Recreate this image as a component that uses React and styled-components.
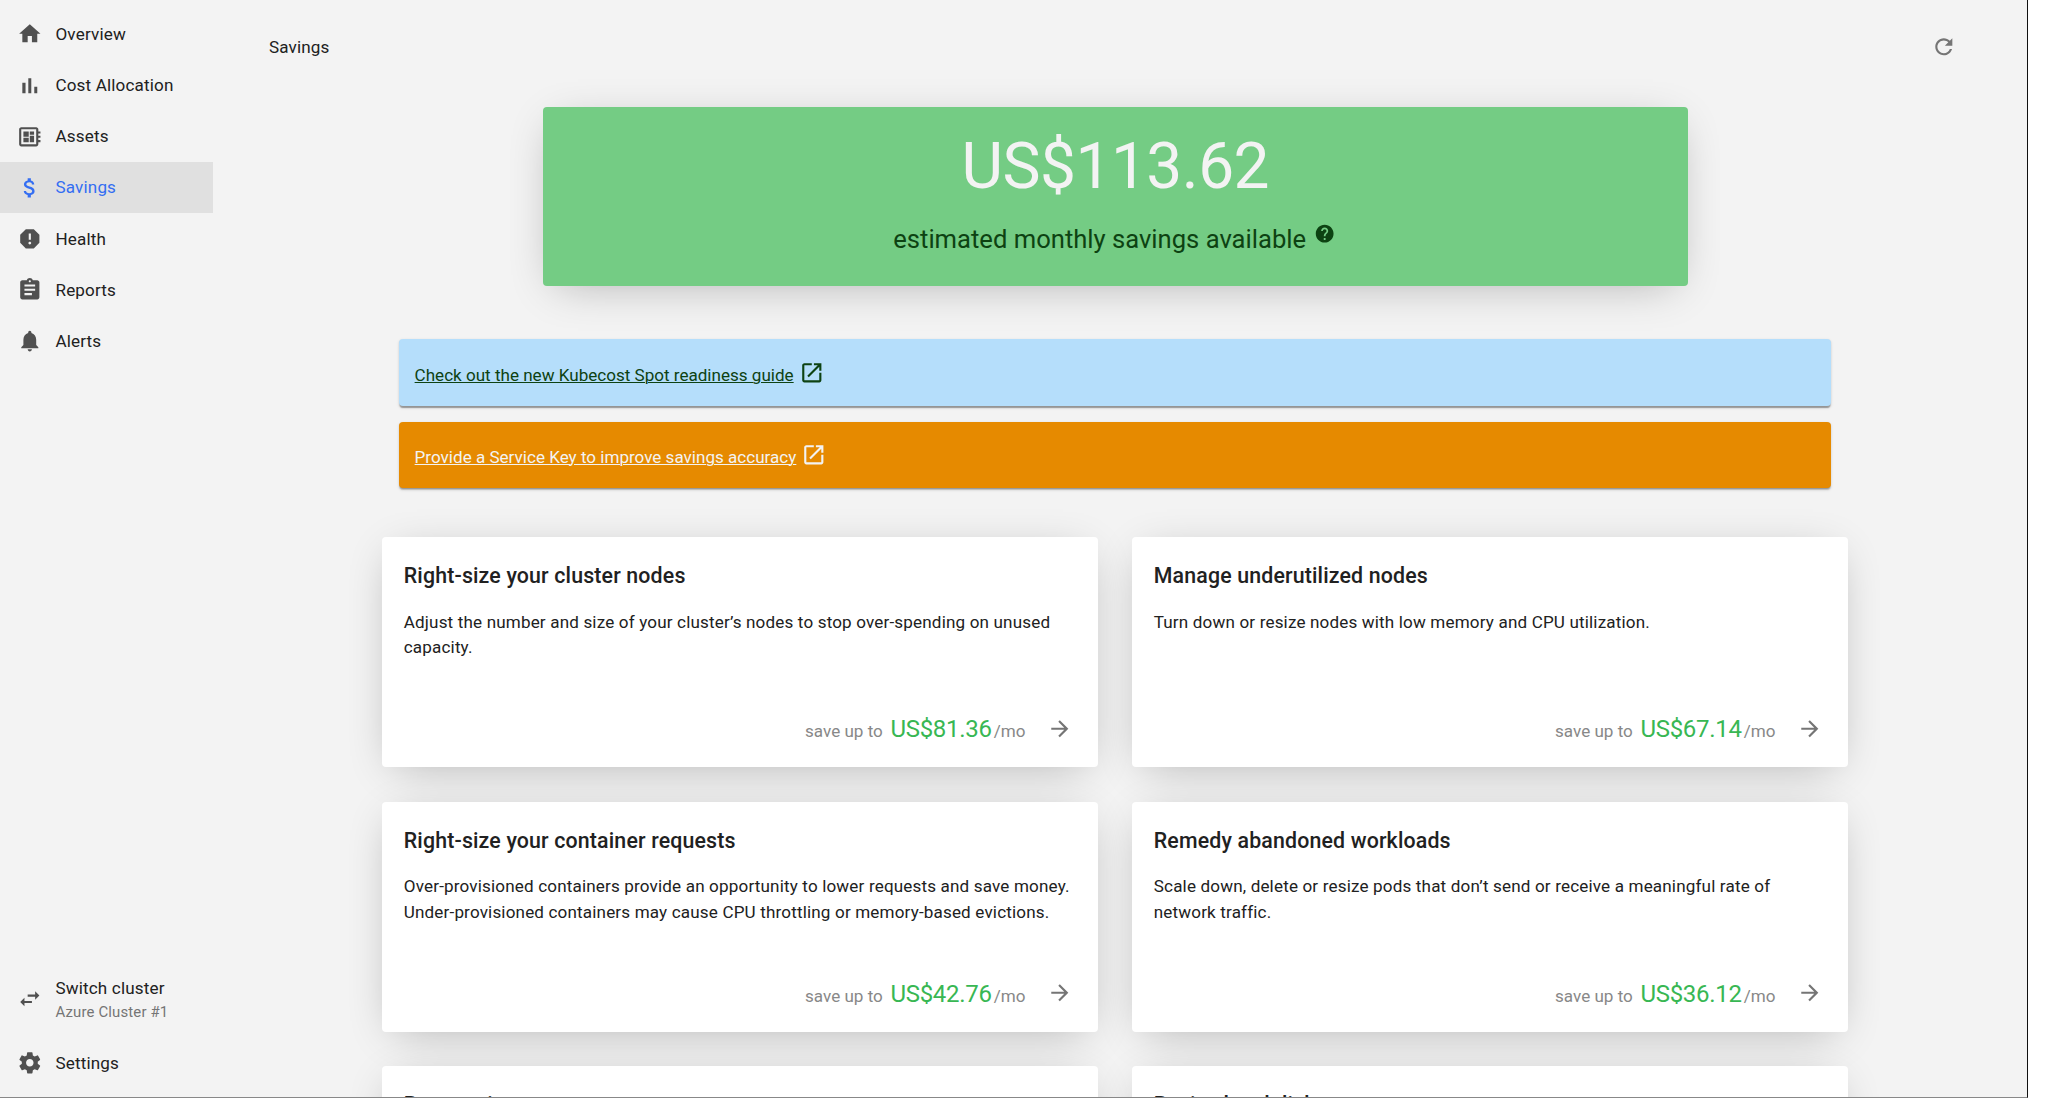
import React from "react";
import styled, { createGlobalStyle } from "styled-components";

const GlobalStyle = createGlobalStyle`
  * { box-sizing: border-box; }
  body {
    margin: 0;
    background: #fff;
    color: #212121;
    font-family: Roboto, "Liberation Sans", sans-serif;
    font-size: 17.07px;
    line-height: 25.6px;
    letter-spacing: 0.16px;
    overflow: hidden;
  }
`;

const ICONS = {
  home: "M10 20v-6h4v6h5v-8h3L12 3 2 12h3v8z",
  bars: "M5 9.2h3V19H5zM10.6 5h2.8v14h-2.8zm5.6 8H19v6h-2.8z",
  board:
    "M22 9V7h-2V5c0-1.1-.9-2-2-2H4c-1.1 0-2 .9-2 2v14c0 1.1.9 2 2 2h14c1.1 0 2-.9 2-2v-2h2v-2h-2v-2h2v-2h-2V9h2zm-4 10H4V5h14v14zM6 13h5v4H6zm6-6h4v3h-4zM6 7h5v5H6zm6 4h4v6h-4z",
  dollar:
    "M11.8 10.9c-2.27-.59-3-1.2-3-2.15 0-1.09 1.01-1.85 2.7-1.85 1.78 0 2.44.85 2.5 2.1h2.21c-.07-1.72-1.12-3.3-3.21-3.81V3h-3v2.16c-1.94.42-3.5 1.68-3.5 3.61 0 2.31 1.91 3.46 4.7 4.13 2.5.6 3 1.48 3 2.41 0 .69-.49 1.79-2.7 1.79-2.06 0-2.87-.92-2.98-2.1h-2.2c.12 2.19 1.76 3.42 3.68 3.83V21h3v-2.15c1.95-.37 3.5-1.5 3.5-3.55 0-2.84-2.43-3.81-4.7-4.4z",
  report:
    "M15.73 3H8.27L3 8.27v7.46L8.27 21h7.46L21 15.73V8.27L15.73 3zM12 17.3c-.72 0-1.3-.58-1.3-1.3 0-.72.58-1.3 1.3-1.3.72 0 1.3.58 1.3 1.3 0 .72-.58 1.3-1.3 1.3zm1-4.3h-2V7h2v6z",
  assignment:
    "M19 3h-4.18C14.4 1.84 13.3 1 12 1c-1.3 0-2.4.84-2.82 2H5c-1.1 0-2 .9-2 2v14c0 1.1.9 2 2 2h14c1.1 0 2-.9 2-2V5c0-1.1-.9-2-2-2zm-7 0c.55 0 1 .45 1 1s-.45 1-1 1-1-.45-1-1 .45-1 1-1zm2 14H7v-2h7v2zm3-4H7v-2h10v2zm0-4H7V7h10v2z",
  bell: "M12 22c1.1 0 2-.9 2-2h-4c0 1.1.89 2 2 2zm6-6v-5c0-3.07-1.64-5.64-4.5-6.32V4c0-.83-.67-1.5-1.5-1.5s-1.5.67-1.5 1.5v.68C7.63 5.36 6 7.92 6 11v5l-2 2v1h16v-1l-2-2z",
  swap: "M6.99 11L3 15l3.99 4v-3H14v-2H6.99v-3zM21 9l-3.99-4v3H10v2h7.01v3L21 9z",
  gear: "M19.43 12.98c.04-.32.07-.64.07-.98s-.03-.66-.07-.98l2.11-1.65c.19-.15.24-.42.12-.64l-2-3.46c-.12-.22-.39-.3-.61-.22l-2.49 1c-.52-.4-1.08-.73-1.69-.98l-.38-2.65C14.46 2.18 14.25 2 14 2h-4c-.25 0-.46.18-.49.42l-.38 2.65c-.61.25-1.17.59-1.69.98l-2.49-1c-.23-.09-.49 0-.61.22l-2 3.46c-.13.22-.07.49.12.64l2.11 1.65c-.04.32-.07.65-.07.98s.03.66.07.98l-2.11 1.65c-.19.15-.24.42-.12.64l2 3.46c.12.22.39.3.61.22l2.49-1c.52.4 1.08.73 1.69.98l.38 2.65c.03.24.24.42.49.42h4c.25 0 .46-.18.49-.42l.38-2.65c.61-.25 1.17-.59 1.69-.98l2.49 1c.23.09.49 0 .61-.22l2-3.46c.12-.22.07-.49-.12-.64l-2.11-1.65zM12 15.5c-1.93 0-3.5-1.57-3.5-3.5s1.57-3.5 3.5-3.5 3.5 1.57 3.5 3.5-1.57 3.5-3.5 3.5z",
  refresh:
    "M17.65 6.35C16.2 4.9 14.21 4 12 4c-4.42 0-7.99 3.58-7.99 8s3.57 8 7.99 8c3.73 0 6.84-2.55 7.73-6h-2.08c-.82 2.33-3.04 4-5.65 4-3.31 0-6-2.69-6-6s2.69-6 6-6c1.66 0 3.14.69 4.22 1.78L13 11h7V4l-2.35 2.35z",
  help: "M12 2C6.48 2 2 6.48 2 12s4.48 10 10 10 10-4.48 10-10S17.52 2 12 2zm1 17h-2v-2h2v2zm2.07-7.75l-.9.92C13.45 12.9 13 13.5 13 15h-2v-.5c0-1.1.45-2.1 1.17-2.83l1.24-1.26c.37-.36.59-.86.59-1.41 0-1.1-.9-2-2-2s-2 .9-2 2H8c0-2.21 1.79-4 4-4s4 1.79 4 4c0 .88-.36 1.68-.93 2.25z",
  launch:
    "M19 19H5V5h7V3H5c-1.11 0-2 .9-2 2v14c0 1.1.89 2 2 2h14c1.1 0 2-.9 2-2v-7h-2v7zM14 3v2h3.59l-9.83 9.83 1.41 1.41L19 6.41V10h2V3h-7z",
  arrow: "M12 4l-1.41 1.41L16.17 11H4v2h12.17l-5.58 5.59L12 20l8-8z",
};

const Svg = styled.svg`
  display: block;
  flex: none;
  width: ${(p) => p.$size}px;
  height: ${(p) => p.$size}px;
  fill: currentColor;
`;

const Icon = ({ name, size = 25.6 }) => (
  <Svg viewBox="0 0 24 24" $size={size} aria-hidden="true">
    <path d={ICONS[name]} />
  </Svg>
);

const Window = styled.div`
  display: flex;
  width: 2028px;
  height: 1098px;
  overflow: hidden;
  background: #f3f3f3;
  border-right: 1px solid #111;
  border-bottom: 1px solid #888;
`;

const Sidebar = styled.nav`
  display: flex;
  flex: none;
  flex-direction: column;
  justify-content: space-between;
  width: 213.33px;
  padding: 8.53px 0;
`;

const NavGroup = styled.div`
  display: flex;
  flex-direction: column;
`;

const NavItem = styled.a`
  display: flex;
  align-items: center;
  height: ${(p) => (p.$tall ? 76.8 : 51.2)}px;
  padding-left: 17.07px;
  gap: 12.8px;
  color: ${(p) => (p.$active ? "#346ef2" : "#212121")};
  background: ${(p) => (p.$active ? "#e0e0e0" : "transparent")};
`;

const NavIcon = styled.span`
  color: ${(p) => (p.$active ? "#346ef2" : "#505050")};
`;

const NavLabel = styled.span`
  display: flex;
  flex-direction: column;
  padding-top: 1px;
`;

const NavNote = styled.span`
  margin-bottom: -1px;
  padding-top: 1px;
  color: #757575;
  font-size: 14.93px;
  line-height: 21.8px;
`;

const Main = styled.main`
  display: flex;
  flex: 1;
  flex-direction: column;
  align-items: center;
  min-width: 0;
  padding: 0 64.7px 0 55px;
`;

const Header = styled.header`
  display: flex;
  flex: none;
  align-items: center;
  justify-content: space-between;
  align-self: stretch;
  height: 93.8px;
  padding-right: 6.1px;
`;

const PageTitle = styled.span`
  padding: 1.2px 0 0 0.6px;
`;

const RefreshButton = styled.span`
  color: #757575;
`;

const ELEVATED = "0 8.5px 42.7px -12.8px rgba(0, 0, 0, 0.3)";

const Hero = styled.section`
  display: flex;
  flex: none;
  flex-direction: column;
  align-items: center;
  width: 1145.5px;
  height: 178.7px;
  margin-top: 13.2px;
  padding-top: 22.3px;
  border-radius: 4px;
  background: #74cc84;
  box-shadow: ${ELEVATED};
`;

const HeroAmount = styled.div`
  color: #f3f3f3;
  font-size: 64px;
  line-height: 75px;
  letter-spacing: -0.00833em;
`;

const HeroCaption = styled.div`
  display: flex;
  align-items: flex-start;
  gap: 8px;
  margin-top: 19.7px;
  padding-right: 2px;
  color: #0d4212;
  font-size: 25.6px;
  line-height: 30px;
  letter-spacing: 0;
`;

const HelpMark = styled.span`
  margin-top: -1px;
`;

const Banners = styled.div`
  display: flex;
  flex: none;
  flex-direction: column;
  gap: 16px;
  width: 1432px;
  margin-top: 53.5px;
`;

const Banner = styled.a`
  display: flex;
  align-items: flex-start;
  gap: 5px;
  height: 66.4px;
  padding: 23.5px 15.3px 0;
  border-radius: 4px;
  color: ${(p) => p.$color};
  background: ${(p) => p.$background};
  letter-spacing: 0;
  box-shadow:
    0 2.1px 1.1px -1.1px rgba(0, 0, 0, 0.2),
    0 1.1px 1.1px 0 rgba(0, 0, 0, 0.14),
    0 1.1px 3.2px 0 rgba(0, 0, 0, 0.12);
`;

const BannerText = styled.span`
  text-decoration: underline;
  text-decoration-thickness: 1px;
`;

const BannerIcon = styled.span`
  margin-top: -3.1px;
`;

const Cards = styled.div`
  display: grid;
  flex: none;
  grid-template-columns: 1fr 1fr;
  grid-auto-rows: 230.3px;
  gap: 34.3px;
  width: 1465.7px;
  margin-top: 49px;
`;

const Card = styled.article`
  display: flex;
  flex-direction: column;
  padding: 21.3px;
  border-radius: 4px;
  background: #fff;
  box-shadow: ${ELEVATED};
`;

const CardTitle = styled.h2`
  margin: 0;
  padding-top: 0.8px;
  font-size: 21.33px;
  font-weight: 500;
  line-height: 34.1px;
  letter-spacing: 0.16px;
`;

const CardText = styled.p`
  margin: 16.7px 0 0;
`;

const CardFooter = styled.div`
  display: flex;
  align-items: center;
  justify-content: flex-end;
  margin-top: auto;
  margin-bottom: -2.4px;
  padding-right: 4.1px;
  color: #888;
`;

const Savings = styled.div`
  display: flex;
  align-items: baseline;
  line-height: 34px;
  letter-spacing: 0;
`;

const Amount = styled.span`
  margin: 0 2px 0 7.6px;
  color: #38b753;
  font-size: 24px;
  letter-spacing: -0.28px;
`;

const CardArrow = styled.span`
  margin: 0 0 3.6px 21.7px;
  color: #757575;
`;

const NAV = [
  { icon: "home", label: "Overview" },
  { icon: "bars", label: "Cost Allocation" },
  { icon: "board", label: "Assets" },
  { icon: "dollar", label: "Savings", active: true },
  { icon: "report", label: "Health" },
  { icon: "assignment", label: "Reports" },
  { icon: "bell", label: "Alerts" },
];

const NAV_BOTTOM = [
  { icon: "swap", label: "Switch cluster", note: "Azure Cluster #1" },
  { icon: "gear", label: "Settings" },
];

const CARDS = [
  {
    title: "Right-size your cluster nodes",
    text: "Adjust the number and size of your cluster’s nodes to stop over-spending on unused capacity.",
    amount: "US$81.36",
  },
  {
    title: "Manage underutilized nodes",
    text: "Turn down or resize nodes with low memory and CPU utilization.",
    amount: "US$67.14",
  },
  {
    title: "Right-size your container requests",
    text: "Over-provisioned containers provide an opportunity to lower requests and save money. Under-provisioned containers may cause CPU throttling or memory-based evictions.",
    amount: "US$42.76",
  },
  {
    title: "Remedy abandoned workloads",
    text: "Scale down, delete or resize pods that don’t send or receive a meaningful rate of network traffic.",
    amount: "US$36.12",
  },
  { title: "Reserve instances" },
  { title: "Resize local disks" },
];

const NavList = ({ items }) => (
  <NavGroup>
    {items.map(({ icon, label, note, active }) => (
      <NavItem key={label} $active={active} $tall={Boolean(note)}>
        <NavIcon $active={active}>
          <Icon name={icon} />
        </NavIcon>
        <NavLabel>
          {label}
          {note && <NavNote>{note}</NavNote>}
        </NavLabel>
      </NavItem>
    ))}
  </NavGroup>
);

const SavingsCard = ({ title, text, amount }) => (
  <Card>
    <CardTitle>{title}</CardTitle>
    {text && <CardText>{text}</CardText>}
    {amount && (
      <CardFooter>
        <Savings>
          save up to <Amount>{amount}</Amount>/mo
        </Savings>
        <CardArrow>
          <Icon name="arrow" />
        </CardArrow>
      </CardFooter>
    )}
  </Card>
);

export default function App() {
  return (
    <>
      <GlobalStyle />
      <Window>
        <Sidebar>
          <NavList items={NAV} />
          <NavList items={NAV_BOTTOM} />
        </Sidebar>
        <Main>
          <Header>
            <PageTitle>Savings</PageTitle>
            <RefreshButton>
              <Icon name="refresh" />
            </RefreshButton>
          </Header>
          <Hero>
            <HeroAmount>US$113.62</HeroAmount>
            <HeroCaption>
              estimated monthly savings available
              <HelpMark>
                <Icon name="help" size={21.33} />
              </HelpMark>
            </HeroCaption>
          </Hero>
          <Banners>
            <Banner $color="#0d4212" $background="#b5defb">
              <BannerText>Check out the new Kubecost Spot readiness guide</BannerText>
              <BannerIcon>
                <Icon name="launch" />
              </BannerIcon>
            </Banner>
            <Banner $color="#f3f3f3" $background="#e68a00">
              <BannerText>Provide a Service Key to improve savings accuracy</BannerText>
              <BannerIcon>
                <Icon name="launch" />
              </BannerIcon>
            </Banner>
          </Banners>
          <Cards>
            {CARDS.map((card) => (
              <SavingsCard key={card.title} {...card} />
            ))}
          </Cards>
        </Main>
      </Window>
    </>
  );
}
